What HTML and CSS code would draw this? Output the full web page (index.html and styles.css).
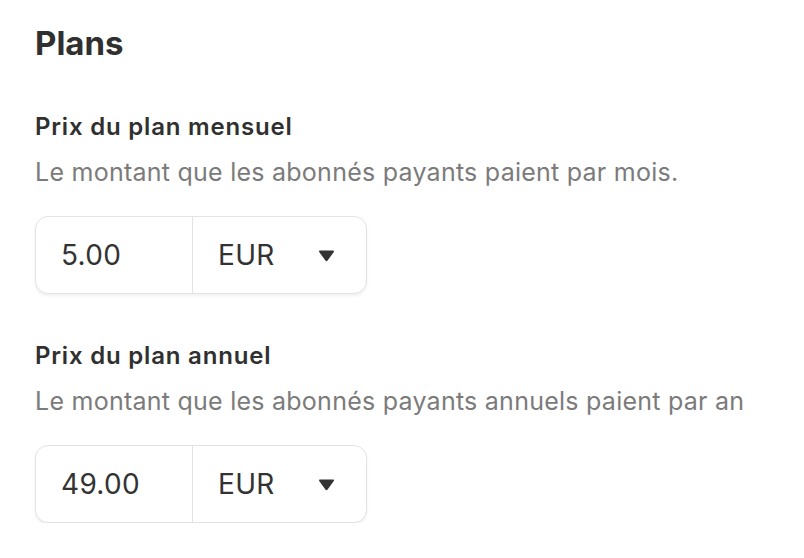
FILE: index.html
```html
<!DOCTYPE html>
<html lang="fr">
<head>
<meta charset="utf-8">
<link rel="stylesheet" href="styles.css">
</head>
<body>
<main class="page">
  <h1 class="title">Plans</h1>
  <section class="field">
    <div class="label">Prix du plan mensuel</div>
    <div class="desc">Le montant que les abonnés payants paient par mois.</div>
    <div class="price">
      <div class="amount">5.00</div>
      <div class="currency"><span>EUR</span><svg class="caret" width="17" height="12" viewBox="0 0 17 12"><path d="M1.2 2 Q0.5 0.6 2 0.6 L15 0.6 Q16.5 0.6 15.8 2 L9.6 10.6 Q8.5 12 7.4 10.6 Z" fill="#333"/></svg></div>
    </div>
  </section>
  <section class="field">
    <div class="label">Prix du plan annuel</div>
    <div class="desc">Le montant que les abonnés payants annuels paient par an</div>
    <div class="price">
      <div class="amount">49.00</div>
      <div class="currency"><span>EUR</span><svg class="caret" width="17" height="12" viewBox="0 0 17 12"><path d="M1.2 2 Q0.5 0.6 2 0.6 L15 0.6 Q16.5 0.6 15.8 2 L9.6 10.6 Q8.5 12 7.4 10.6 Z" fill="#333"/></svg></div>
    </div>
  </section>
</main>
</body>
</html>
```
FILE: styles.css
```css
* { box-sizing: border-box; }
html, body { margin: 0; background: #fff; }
body {
  font-family: Inter, "Noto Sans", sans-serif;
  color: #333;
}
.page {
  padding: 23px 0 0 35px;
}
.title {
  margin: 0;
  font-size: 33px;
  line-height: 40px;
  font-weight: 700;
  color: #303030;
}
.field { margin-top: 50px; }
.field + .field { margin-top: 48px; }
.label {
  font-size: 24px;
  line-height: 28px;
  font-weight: 600;
  letter-spacing: 0.8px;
  color: #303030;
}
.desc {
  margin-top: 15px;
  font-size: 25px;
  line-height: 32px;
  letter-spacing: 0.25px;
  color: #7b7b7b;
}
.price {
  margin-top: 28px;
  display: flex;
  width: 332px;
  height: 78px;
  border: 1.5px solid #e3e3e3;
  border-radius: 13px;
  background: #fff;
  box-shadow: 0 2px 3px rgba(0,0,0,0.06);
}
.amount {
  width: 157px;
  display: flex;
  align-items: center;
  padding-left: 25px;
  font-size: 28px;
  letter-spacing: 0.3px;
  color: #333;
  border-right: 1.5px solid #e3e3e3;
}
.currency {
  flex: 1;
  display: flex;
  align-items: center;
  justify-content: space-between;
  padding: 0 31px 0 25px;
  font-size: 28px;
  letter-spacing: 0.3px;
  color: #333;
}
.caret { display: block; margin-top: 1px; }
```
